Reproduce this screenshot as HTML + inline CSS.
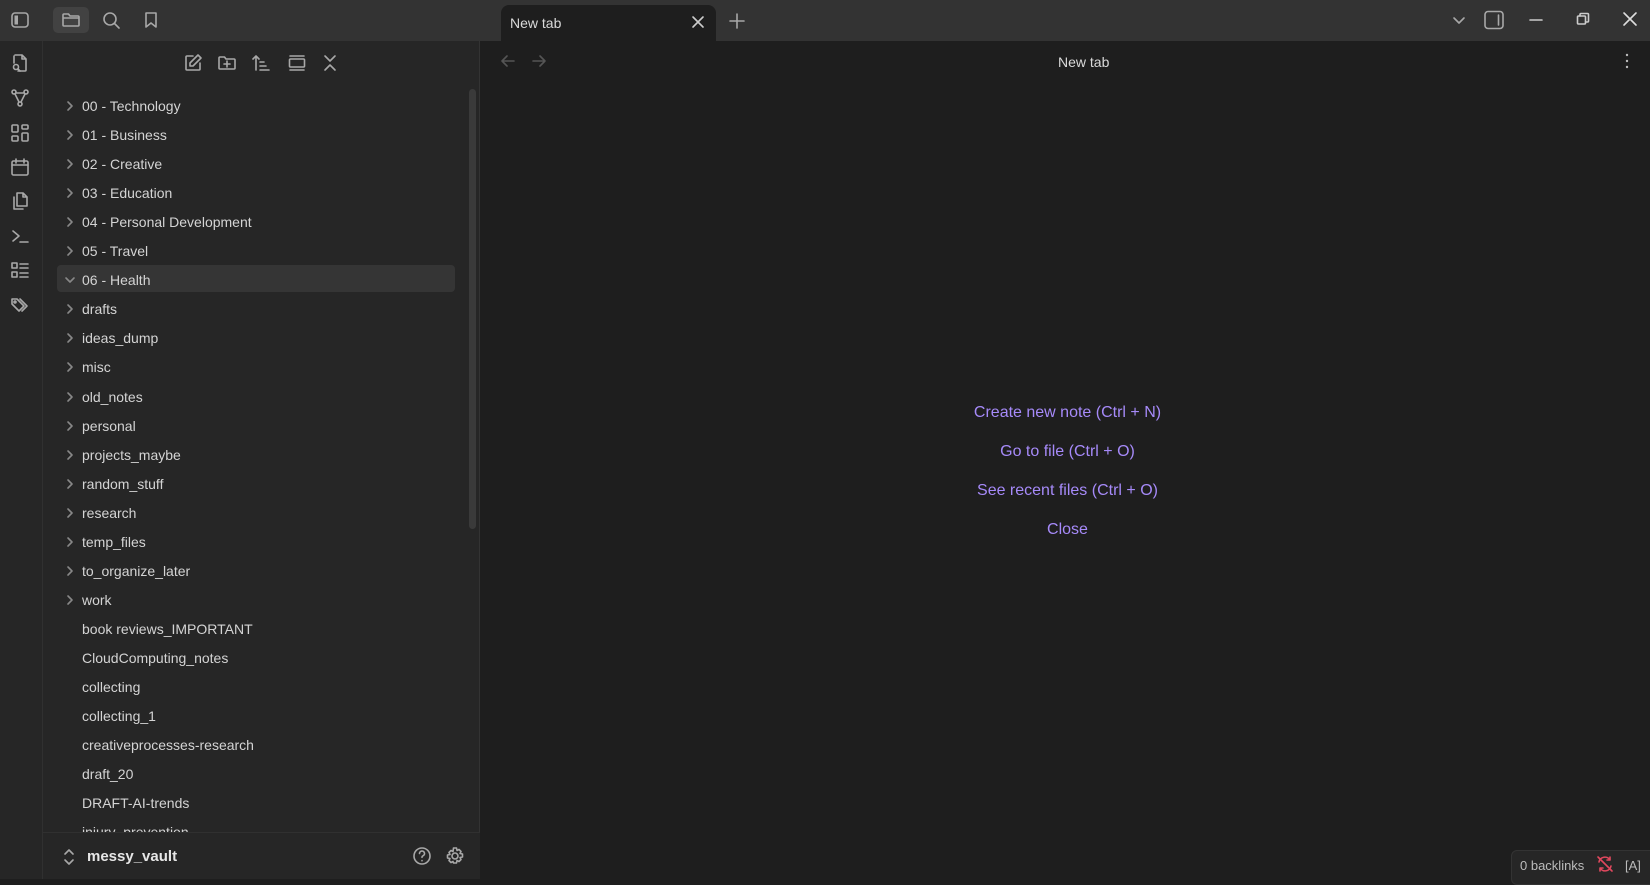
<!DOCTYPE html>
<html><head><style>
*{margin:0;padding:0;box-sizing:border-box}
body{width:1650px;height:879px;overflow:hidden;background:#1e1e1e;font-family:"Liberation Sans",sans-serif;color:#dadada;position:relative}
.abs{position:absolute}
#top{left:0;top:0;width:1650px;height:41px;background:#333333}
#ribbon{left:0;top:41px;width:43px;height:838px;background:#262626;border-right:1px solid #303030}
#side{left:43px;top:41px;width:437px;height:838px;background:#262626;border-right:1px solid #333}
svg{fill:none;stroke:#a8a8a8;stroke-width:1.6;stroke-linecap:round;stroke-linejoin:round}
.row{position:absolute;left:82px;font-size:14px;color:#d4d4d4;line-height:20px}
.chev{position:absolute;left:64px}
.link{position:absolute;left:0;width:2135px;text-align:center;font-size:16px;color:#a68af9}
</style></head><body>
<div id="top" class="abs"></div>
<div class="abs" style="left:53px;top:7px;width:36px;height:26px;background:#424242;border-radius:5px"></div>
<svg class="abs" style="left:10px;top:10px" width="20" height="20" viewBox="0 0 20 20"><rect x="2" y="3" width="16" height="14" rx="3"/><rect x="4.5" y="5.5" width="3.5" height="9" fill="#a8a8a8" stroke="none"/></svg>
<svg class="abs" style="left:61px;top:10px" width="20" height="20" viewBox="0 0 20 20"><path d="M2 5v10a1 1 0 0 0 1 1h14a1 1 0 0 0 1-1V7a1 1 0 0 0-1-1H9L7.5 4H3a1 1 0 0 0-1 1zM2 8h16"/></svg>
<svg class="abs" style="left:101px;top:10px" width="20" height="20" viewBox="0 0 20 20"><circle cx="9" cy="9" r="6"/><path d="M13.5 13.5L18 18"/></svg>
<svg class="abs" style="left:141px;top:10px" width="20" height="20" viewBox="0 0 20 20"><path d="M5 3h10v14l-5-4-5 4z"/></svg>
<div class="abs" style="left:501px;top:5px;width:215px;height:36px;background:#1e1e1e;border-radius:8px 8px 0 0"></div>
<div class="abs" style="left:510px;top:15px;font-size:14px;color:#dadada">New tab</div>
<svg class="abs" style="left:690px;top:14px" width="16" height="16" viewBox="0 0 16 16"><path d="M3 3l10 10M13 3L3 13" stroke="#ccc"/></svg>
<svg class="abs" style="left:728px;top:12px" width="18" height="18" viewBox="0 0 18 18"><path d="M9 2v14M2 9h14"/></svg>
<svg class="abs" style="left:1452px;top:13px" width="14" height="14" viewBox="0 0 14 14"><path d="M2 5l5 5 5-5"/></svg>
<svg class="abs" style="left:1483px;top:10px" width="22" height="20" viewBox="0 0 22 20"><rect x="2" y="1.5" width="18" height="17" rx="3"/><path d="M15.5 5v10"/></svg>
<svg class="abs" style="left:1528px;top:12px" width="16" height="16" viewBox="0 0 16 16"><path d="M2 8h12" stroke="#ccc"/></svg>
<svg class="abs" style="left:1575px;top:11px" width="16" height="16" viewBox="0 0 16 16"><rect x="2.5" y="5" width="8" height="8" rx="1" stroke="#ccc"/><path d="M5 5V3.5a1 1 0 0 1 1-1h6.5a1 1 0 0 1 1 1V10a1 1 0 0 1-1 1H10.5" stroke="#ccc"/></svg>
<svg class="abs" style="left:1622px;top:11px" width="16" height="16" viewBox="0 0 16 16"><path d="M2 2l12 12M14 2L2 14" stroke="#ddd"/></svg>

<div id="ribbon" class="abs"></div>
<svg class="abs" style="left:10px;top:53px" width="20" height="20" viewBox="0 0 20 20"><path d="M5 2h7l4 4v11a1 1 0 0 1-1 1H8M4 10V3M12 2v4h4"/><circle cx="6" cy="14" r="2.5"/><path d="M8 16l2 2"/></svg>
<svg class="abs" style="left:10px;top:88px" width="20" height="20" viewBox="0 0 20 20"><circle cx="4" cy="4" r="2"/><circle cx="16" cy="4" r="2"/><circle cx="10" cy="16" r="2"/><path d="M5 6l4 8M15 6l-4 8M6 5h8"/></svg>
<svg class="abs" style="left:10px;top:123px" width="20" height="20" viewBox="0 0 20 20"><rect x="2" y="2" width="6" height="7" rx="1"/><rect x="12" y="2" width="6" height="4" rx="1"/><rect x="2" y="13" width="6" height="5" rx="1"/><rect x="12" y="10" width="6" height="8" rx="1"/></svg>
<svg class="abs" style="left:10px;top:157px" width="20" height="20" viewBox="0 0 20 20"><rect x="2" y="4" width="16" height="14" rx="1.5"/><path d="M2 8h16M6 2v4M14 2v4"/></svg>
<svg class="abs" style="left:10px;top:191px" width="20" height="20" viewBox="0 0 20 20"><path d="M7 2h6l4 4v9H7zM13 2v4h4M4 6v12h9"/></svg>
<svg class="abs" style="left:10px;top:226px" width="20" height="20" viewBox="0 0 20 20"><path d="M3 5l6 5-6 5M10 16h8"/></svg>
<svg class="abs" style="left:10px;top:260px" width="20" height="20" viewBox="0 0 20 20"><rect x="2" y="3" width="5" height="5"/><rect x="2" y="12" width="5" height="5"/><path d="M10 4h8M10 8h8M10 13h8M10 17h8"/></svg>
<svg class="abs" style="left:10px;top:295px" width="20" height="20" viewBox="0 0 20 20"><path d="M2 4v5l7 7 5-5-7-7zM7 4l7 7M10 4l7 7-5 5"/><circle cx="5" cy="7" r="1"/></svg>

<div id="side" class="abs"></div>
<svg class="abs" style="left:183px;top:53px" width="20" height="20" viewBox="0 0 20 20"><path d="M10 3H4a1 1 0 0 0-1 1v12a1 1 0 0 0 1 1h12a1 1 0 0 0 1-1v-6M15 2l3 3-8 8H7v-3z"/></svg>
<svg class="abs" style="left:217px;top:53px" width="20" height="20" viewBox="0 0 20 20"><path d="M2 5v10a1 1 0 0 0 1 1h14a1 1 0 0 0 1-1V7a1 1 0 0 0-1-1H9L7.5 4H3a1 1 0 0 0-1 1zM10 8v6M7 11h6"/></svg>
<svg class="abs" style="left:251px;top:53px" width="20" height="20" viewBox="0 0 20 20"><path d="M5 17V3M2 6l3-3 3 3M9 9h4M9 13h6M9 17h9"/></svg>
<svg class="abs" style="left:287px;top:53px" width="20" height="20" viewBox="0 0 20 20"><path d="M3 3h14M3 17h14"/><rect x="2.5" y="6" width="15" height="8" rx="1"/></svg>
<svg class="abs" style="left:320px;top:53px" width="20" height="20" viewBox="0 0 20 20"><path d="M5 3l5 5 5-5M5 17l5-5 5 5"/></svg>
<div class="abs" style="left:469px;top:89px;width:7px;height:440px;background:#3a3a3a;border-radius:4px"></div>
<div class="abs" style="left:57px;top:265px;width:398px;height:27px;background:#353535;border-radius:4px"></div>
<div id="rows"></div>
<div class="abs" style="left:43px;top:832px;width:437px;height:47px;background:#262626;border-top:1px solid #303030"></div>
<svg class="abs" style="left:62px;top:848px" width="14" height="18" viewBox="0 0 14 18"><path d="M3 6l4-4 4 4M3 12l4 4 4-4"/></svg>
<div class="abs" style="left:87px;top:848px;font-size:15px;font-weight:bold;color:#e6e6e6">messy_vault</div>
<svg class="abs" style="left:412px;top:846px" width="20" height="20" viewBox="0 0 20 20"><circle cx="10" cy="10" r="8"/><path d="M7.5 7.5a2.5 2.5 0 1 1 3.5 2.3c-.7.3-1 .8-1 1.5M10 14.5v.2"/></svg>
<svg class="abs" style="left:445px;top:846px" width="20" height="20" viewBox="0 0 20 20"><circle cx="10" cy="10" r="3"/><path d="M8.5 2h3l.5 2.5 2-1 2 2-1 2 2.5.5v3l-2.5.5 1 2-2 2-2-1-.5 2.5h-3L8 15.5l-2 1-2-2 1-2L2.5 12V9L5 8.5 4 6.5l2-2 2 1z"/></svg>

<div class="abs" style="left:1058px;top:54px;font-size:14px;color:#dadada">New tab</div>
<svg class="abs" style="left:500px;top:53px" width="16" height="16" viewBox="0 0 16 16"><path d="M14 8H2M7 3L2 8l5 5" stroke="#555"/></svg>
<svg class="abs" style="left:531px;top:53px" width="16" height="16" viewBox="0 0 16 16"><path d="M2 8h12M9 3l5 5-5 5" stroke="#555"/></svg>
<svg class="abs" style="left:1620px;top:51px" width="14" height="20" viewBox="0 0 14 20"><circle cx="7" cy="4" r="1.2" fill="#bbb" stroke="none"/><circle cx="7" cy="10" r="1.2" fill="#bbb" stroke="none"/><circle cx="7" cy="16" r="1.2" fill="#bbb" stroke="none"/></svg>
<div class="link" style="top:404px">Create new note (Ctrl + N)</div>
<div class="link" style="top:443px">Go to file (Ctrl + O)</div>
<div class="link" style="top:482px">See recent files (Ctrl + O)</div>
<div class="link" style="top:521px">Close</div>

<div class="abs" style="left:1511px;top:850px;width:145px;height:35px;background:#262626;border:1px solid #333;border-radius:6px"></div>
<div class="abs" style="left:1520px;top:858px;font-size:13px;color:#bbb">0 backlinks</div>
<svg class="abs" style="left:1596px;top:855px" width="18" height="18" viewBox="0 0 18 18"><path d="M3 7a6 6 0 0 1 11-2M15 11a6 6 0 0 1-11 2M14 2v3h-3M4 16v-3h3M2 2l14 14" stroke="#e0485e"/></svg>
<div class="abs" style="left:1625px;top:858px;font-size:13px;color:#bbb">[A]</div>

<script>
var rows=[["00 - Technology",1],["01 - Business",1],["02 - Creative",1],["03 - Education",1],["04 - Personal Development",1],["05 - Travel",1],["06 - Health",2],["drafts",1],["ideas_dump",1],["misc",1],["old_notes",1],["personal",1],["projects_maybe",1],["random_stuff",1],["research",1],["temp_files",1],["to_organize_later",1],["work",1],["book reviews_IMPORTANT",0],["CloudComputing_notes",0],["collecting",0],["collecting_1",0],["creativeprocesses-research",0],["draft_20",0],["DRAFT-AI-trends",0],["injury_prevention",0]];
var h="";
rows.forEach(function(r,i){var c=106+29.05*i;
h+='<div class="row" style="top:'+(c-10)+'px">'+r[0]+'</div>';
if(r[1]==1)h+='<svg class="chev abs" style="top:'+(c-6)+'px" width="12" height="12" viewBox="0 0 12 12"><path d="M4 2l4 4-4 4" stroke="#888"/></svg>';
if(r[1]==2)h+='<svg class="chev abs" style="top:'+(c-6)+'px" width="12" height="12" viewBox="0 0 12 12"><path d="M2 4l4 4 4-4" stroke="#888"/></svg>';
});
document.getElementById("rows").innerHTML=h;
</script>
</body></html>
